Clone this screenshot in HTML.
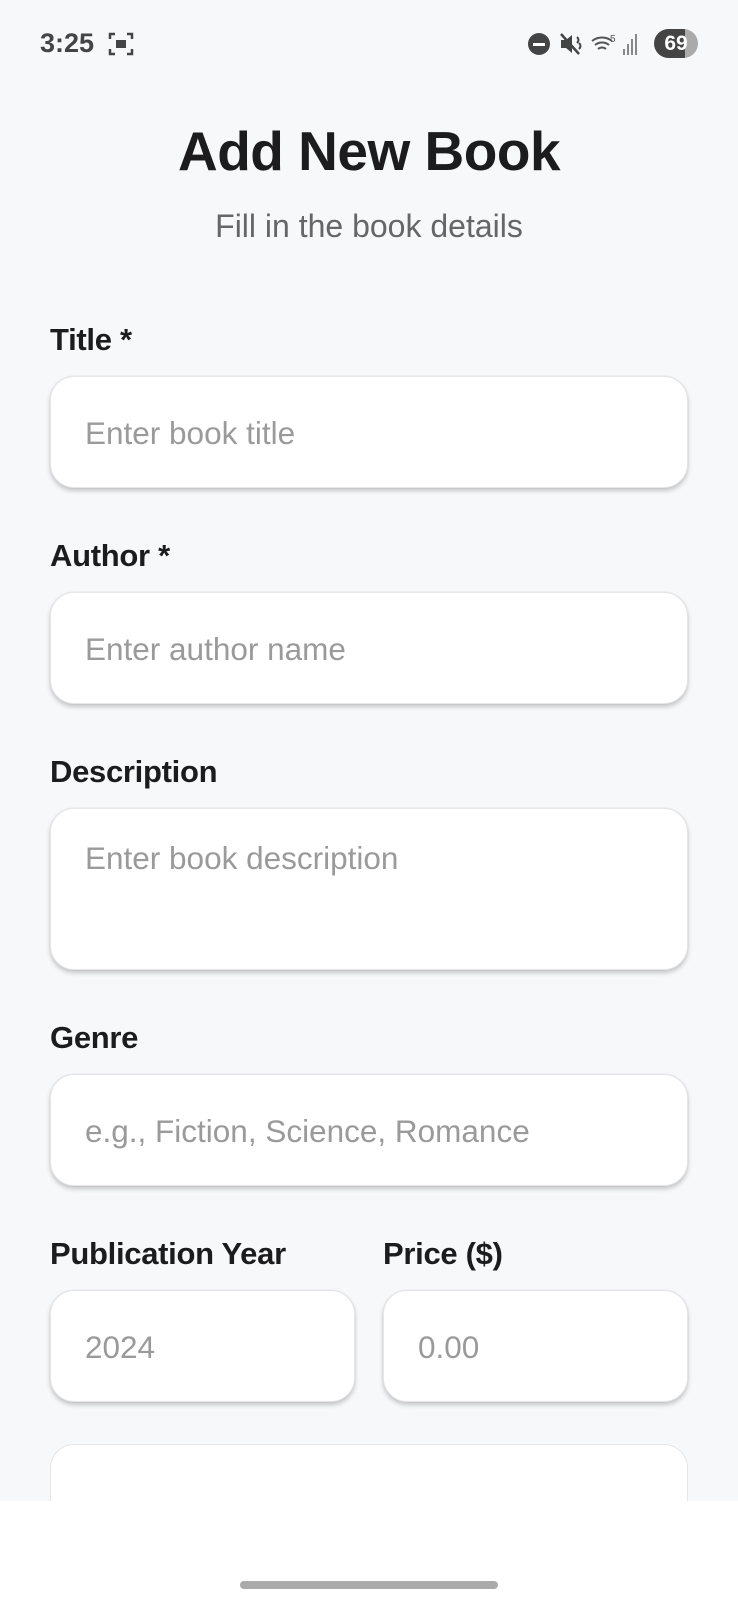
<!DOCTYPE html>
<html><head><meta charset="utf-8"><style>
*{margin:0;padding:0;box-sizing:border-box}
body{width:738px;height:1600px;background:#f7f8fa;font-family:"Liberation Sans",Roboto,sans-serif;position:relative;overflow:hidden}
.abs{position:absolute}
.lbl{position:absolute;left:50px;font-size:31px;font-weight:bold;color:#1c1c1e;letter-spacing:-0.3px}
.inp{position:absolute;background:#fff;border-radius:24px;box-shadow:0 3px 5px rgba(0,0,0,0.2),0 0 1px rgba(0,0,0,0.15);border:1px solid #e6e6e8}
.ph{position:absolute;left:34px;font-size:31.5px;color:#9a9a9a;white-space:nowrap}
</style></head><body>
<div class="abs" style="left:40px;top:28px;font-size:27px;font-weight:bold;color:#444">3:25</div>
<svg class="abs" style="left:108px;top:31px" width="26" height="26" viewBox="0 0 26 26" fill="none" stroke="#444" stroke-width="2.5"><path d="M2 8V3h5M19 3h5v5M24 18v5h-5M7 23H2v-5"/><rect x="8" y="9" width="10" height="8" fill="#444" stroke="none"/></svg>
<div class="abs" style="left:528px;top:33px;width:22px;height:22px;border-radius:50%;background:#444"><div class="abs" style="left:5px;top:9.5px;width:12px;height:3px;background:#fff"></div></div>
<svg class="abs" style="left:558px;top:31px" width="26" height="26" viewBox="0 0 26 26"><path d="M3 9h5l6-5v18l-6-5H3z" fill="#444"/><path d="M3 3l18 20" stroke="#444" stroke-width="2.5"/><path d="M19 6c2 2 2 4 0 6M21 12c2 2 2 4 0 6" stroke="#444" stroke-width="2" fill="none"/></svg>
<svg class="abs" style="left:590px;top:31px" width="50" height="26" viewBox="0 0 50 26" fill="none" stroke="#555" stroke-width="2"><path d="M2 10a16 16 0 0 1 20 0M5 14a11 11 0 0 1 14 0M8 18a6 6 0 0 1 8 0"/><text x="20" y="11" font-size="10" fill="#555" stroke="none" font-family="Liberation Sans">5</text><path d="M34 24V18M38 24V13M42 24V8M46 24V3" stroke="#888"/></svg>
<div class="abs" style="left:654px;top:29px;width:44px;height:29px;border-radius:15px;background:linear-gradient(90deg,#444 70%,#aaa 70%);color:#fff;font-size:21px;font-weight:bold;text-align:center;line-height:29px">69</div>

<div class="abs" style="left:0;width:738px;top:119px;text-align:center;font-size:55px;font-weight:bold;color:#1c1c1e;letter-spacing:-0.5px">Add New Book</div>
<div class="abs" style="left:0;width:738px;top:208px;text-align:center;font-size:32px;color:#666">Fill in the book details</div>

<div class="lbl" style="top:322px">Title *</div>
<div class="inp" style="left:50px;top:376px;width:638px;height:112px"><div class="ph" style="top:38px">Enter book title</div></div>

<div class="lbl" style="top:538px">Author *</div>
<div class="inp" style="left:50px;top:592px;width:638px;height:112px"><div class="ph" style="top:38px">Enter author name</div></div>

<div class="lbl" style="top:754px">Description</div>
<div class="inp" style="left:50px;top:808px;width:638px;height:162px"><div class="ph" style="top:31px">Enter book description</div></div>

<div class="lbl" style="top:1020px">Genre</div>
<div class="inp" style="left:50px;top:1074px;width:638px;height:112px"><div class="ph" style="top:38px">e.g., Fiction, Science, Romance</div></div>

<div class="lbl" style="top:1236px">Publication Year</div>
<div class="lbl" style="top:1236px;left:383px">Price ($)</div>
<div class="inp" style="left:50px;top:1290px;width:305px;height:112px"><div class="ph" style="top:38px">2024</div></div>
<div class="inp" style="left:383px;top:1290px;width:305px;height:112px"><div class="ph" style="top:38px">0.00</div></div>

<div class="inp" style="left:50px;top:1444px;width:638px;height:112px;box-shadow:none"></div>
<div class="abs" style="left:0;top:1501px;width:738px;height:99px;background:#fff"></div>
<div class="abs" style="left:240px;top:1581px;width:258px;height:8px;border-radius:4px;background:#aaa"></div>
</body></html>
